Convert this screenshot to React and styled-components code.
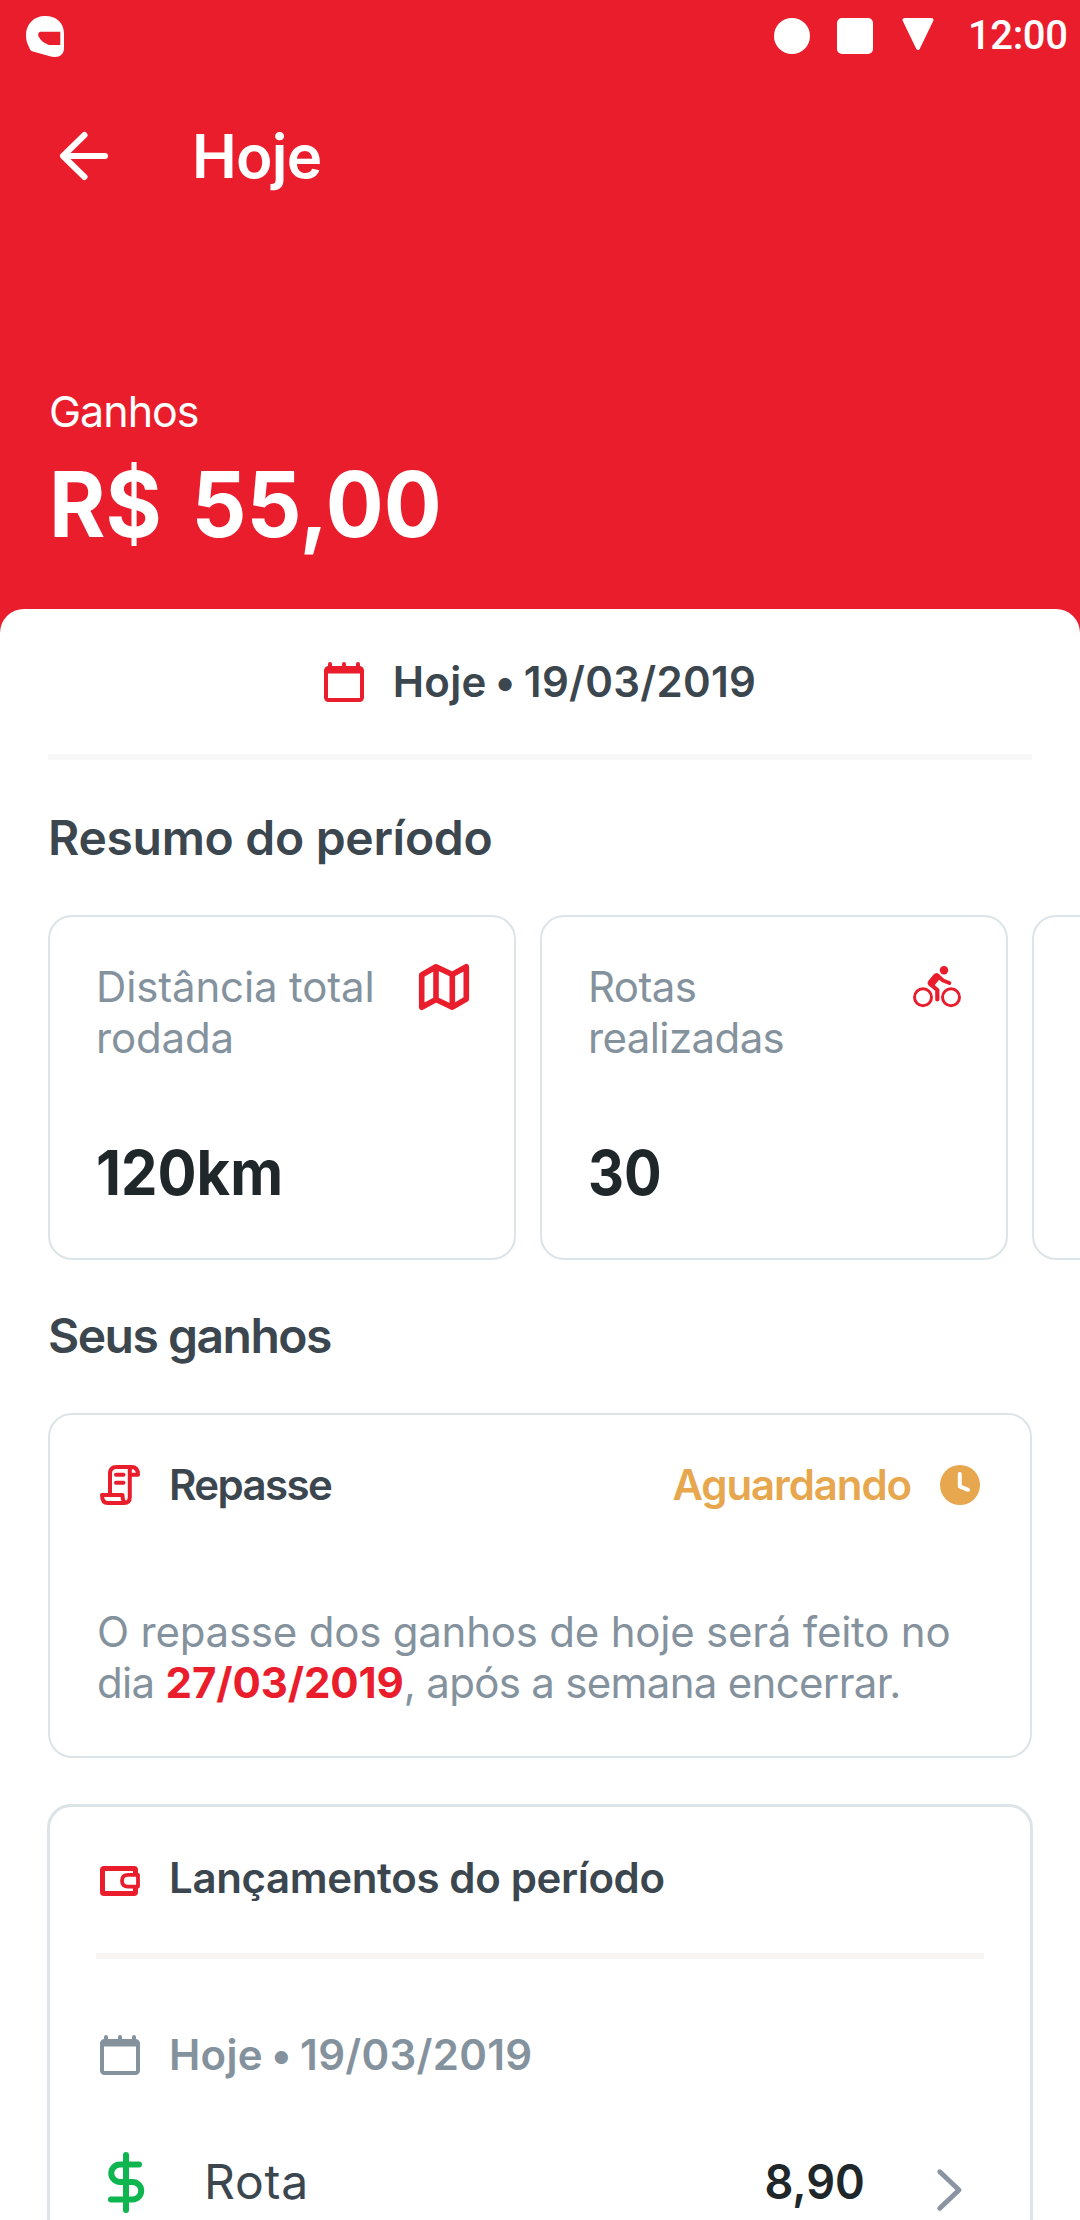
import React from "react";
import styled, { createGlobalStyle } from "styled-components";

const color = {
  red: "#ea1d2c",
  ink: "#3b464f",
  dark: "#20272a",
  muted: "#84929e",
  line: "#dce4e7",
  amber: "#e7a74e",
  green: "#0fb64f",
};

const GlobalStyle = createGlobalStyle`
  * { box-sizing: border-box; }
  body { margin: 0; background: #fff; }
`;

const Screen = styled.main`
  display: flex;
  flex-direction: column;
  width: 1080px;
  height: 2220px;
  overflow: hidden;
  background: ${color.red};
  font-family: Inter, "Liberation Sans", sans-serif;
`;

const StatusBar = styled.div`
  display: flex;
  align-items: center;
  justify-content: space-between;
  height: 72px;
  padding: 0 14px 0 26px;
`;

const StatusIcons = styled.div`
  display: flex;
  align-items: center;
`;

const Shape = styled.span`
  width: 36px;
  height: 36px;
  margin-right: ${(p) => (p.$round ? 27 : 29)}px;
  background: #fff;
  border-radius: ${(p) => (p.$round ? "50%" : "5px")};
`;

const Clock = styled.span`
  width: 98px;
  margin-left: 34px;
  color: #fff;
  font: 500 40px/48px Roboto, sans-serif;
  letter-spacing: -0.4px;
  white-space: nowrap;
`;

const AppBar = styled.header`
  display: flex;
  align-items: center;
  height: 168px;
  padding-left: 60px;
  gap: 84px;
`;

const Text = styled.span`
  font-size: ${(p) => p.$size || 42}px;
  line-height: ${(p) => p.$line || 52}px;
  font-weight: ${(p) => p.$weight || 400};
  letter-spacing: ${(p) => p.$track || 0}px;
  word-spacing: ${(p) => p.$words || 0}px;
  color: ${(p) => p.$color || color.ink};
  white-space: nowrap;
`;

const Figure = styled(Text)`
  transform: scaleX(${(p) => p.$condense});
  transform-origin: ${(p) => p.$origin || "left"} center;
`;

const Earnings = styled.section`
  display: flex;
  flex-direction: column;
  gap: 12px;
  height: 369px;
  padding: 145px 49px 0;
`;

const Sheet = styled.section`
  flex: 1;
  padding: 0 48px;
  background: #fff;
  border-radius: 24px 24px 0 0;
  overflow: hidden;
`;

const DateRow = styled.div`
  display: flex;
  align-items: center;
  justify-content: center;
  gap: 29px;
  height: 145px;
`;

const Divider = styled.hr`
  height: 6px;
  margin: ${(p) => p.$top || 0}px ${(p) => p.$bleed || 0}px 0;
  border: 0;
  background: ${(p) => p.$color || "#f8f8f8"};
`;

const Heading = styled.h2`
  margin: ${(p) => p.$top}px 0 48px;
  font-size: 48px;
  line-height: 58px;
  font-weight: 600;
  letter-spacing: ${(p) => p.$track || 0}px;
  color: ${color.ink};
`;

const Carousel = styled.div`
  display: grid;
  grid-template-columns: repeat(3, 468px);
  gap: 24px;
`;

const Card = styled.article`
  border: ${(p) => p.$border || 2}px solid ${color.line};
  border-radius: 24px;
`;

const StatCard = styled(Card)`
  display: flex;
  flex-direction: column;
  justify-content: space-between;
  height: 345px;
  padding: 44px 45px 48px 46px;
`;

const StatTop = styled.div`
  display: flex;
  justify-content: space-between;
`;

const StatLabel = styled(Text).attrs({ $line: 51, $color: color.muted })`
  white-space: pre-line;
`;

const StatValue = styled(Figure).attrs({
  $size: 62,
  $line: 75,
  $weight: 700,
  $color: color.dark,
})``;

const StatIcon = styled.span`
  padding-top: ${(p) => p.$top}px;
`;

const PayoutCard = styled(Card)`
  height: 345px;
  padding: 44px 50px 0;
`;

const Row = styled.div`
  display: flex;
  align-items: center;
  gap: 29px;
  height: 52px;
  margin-top: ${(p) => p.$top || 0}px;
`;

const Spacer = styled.span`
  flex: 1;
`;

const PayoutText = styled.p`
  display: flex;
  flex-direction: column;
  margin: 95px 0 0 -3px;

  strong {
    font-weight: 700;
    letter-spacing: -0.1px;
    color: ${color.red};
  }
`;

const PayoutLine = styled(Text).attrs({ $line: 51, $color: color.muted })``;

const EntriesCard = styled(Card)`
  height: 480px;
  margin: 46px -1px 0;
  padding: 45px 50px 0;
`;

const EntryRow = styled.div`
  display: flex;
  align-items: center;
  height: 60px;
  margin-top: 71px;
  padding: 0 18px 0 8px;
`;

const EntryLabel = styled(Text)`
  margin-left: 60px;
`;

const EntryArrow = styled.span`
  margin-left: 72px;
  padding-top: 16px;
`;

const Glyph = styled.svg`
  display: block;
  flex: none;
  overflow: visible;
  fill: none;
  stroke-linecap: round;
  stroke-linejoin: round;
`;

const Icon = ({ w, h, children, ...rest }) => (
  <Glyph width={w} height={h} viewBox={`0 0 ${w} ${h}`} {...rest}>
    {children}
  </Glyph>
);

const Helmet = () => (
  <Icon w={38} h={41}>
    <path
      fill="#fff"
      fillRule="evenodd"
      d="M19 0C31 0 38 7 38 18V32C38 38 34 41 29 41C27 41 25 40.5 23 40L7 35.5C4.5 35 4 33.5 3 31C1 27 0 24 0 19C0 8 8 0 19 0ZM15 15.7C12.5 15.7 11.7 18 12.6 20.5C14.5 24.5 18.5 27.5 23 29H34.3V15.7Z"
    />
  </Icon>
);

const Triangle = () => (
  <Icon w={32} h={36}>
    <path fill="#fff" stroke="#fff" strokeWidth="4" d="M2.5 2H29.5L16 30Z" />
  </Icon>
);

const BackArrow = () => (
  <Icon w={48} h={48} stroke="#fff" strokeWidth="6">
    <path d="M24.5 3L3 24L24.5 45M4 24H45" />
  </Icon>
);

const Calendar = ({ tone }) => (
  <Icon w={40} h={40} stroke={tone} strokeWidth="4">
    <rect x="2" y="6" width="36" height="32" rx="2.5" />
    <path d="M3 8H37V9.6H3Z" />
    <path d="M6 2V6M20 2V6M34 2V6" />
  </Icon>
);

const MapIcon = () => (
  <Icon w={50} h={46} stroke={color.red} strokeWidth="5.6">
    <path d="M2.7 11L17 2.8L33.3 10.5L47.3 2.8V35L33.3 43.2L17 35.5L2.7 43.2ZM17 3V35M33.3 11V43" />
  </Icon>
);

const Bike = () => (
  <Icon w={48} h={41} stroke={color.red}>
    <circle cx="10" cy="31.2" r="8.5" strokeWidth="3" />
    <circle cx="38" cy="31.2" r="8.5" strokeWidth="3" />
    <circle cx="31" cy="4.2" r="4.2" fill={color.red} stroke="none" />
    <path d="M23.5 11L18.5 17" strokeWidth="7.5" />
    <path d="M18.5 19L24.3 24V33.5" strokeWidth="4.2" />
    <path d="M25 10L30 14.5L36.4 17" strokeWidth="3.8" />
  </Icon>
);

const Scroll = () => (
  <Icon w={40} h={40} stroke={color.red} strokeWidth="4">
    <path d="M10 28V8.5Q10 2 16.5 2H31.5Q38 2 38 9.8H30.2M29.8 2.5V32Q29.8 38 24 38H8Q2 38 2 30H22.5Q22.5 37 26 38M16 9.8H23.5M16 17.7H23.5" />
  </Icon>
);

const ClockIcon = () => (
  <Icon w={40} h={40}>
    <circle cx="20" cy="20" r="20" fill={color.amber} />
    <path d="M19.8 9V21.4L28 24.8" stroke="#fff" strokeWidth="4" />
  </Icon>
);

const Wallet = () => (
  <Icon w={40} h={38} stroke={color.red} strokeWidth="5">
    <rect x="2.5" y="9.5" width="33" height="25" rx="1.5" />
    <path d="M38 15.8H28Q22 15.8 22 21.7T28 27.6H38Z" fill="#fff" strokeWidth="3.8" />
  </Icon>
);

const Dollar = () => (
  <Icon w={36} h={61} stroke={color.green} strokeWidth="6">
    <path d="M18 3V58M31 12.5H12A8.6 8.6 0 0 0 12 30H24.5A8.6 8.6 0 0 1 24.5 47.5H3" />
  </Icon>
);

const Chevron = () => (
  <Icon w={25} h={42} stroke="#8a94a2" strokeWidth="5">
    <path d="M2.8 2.8L22 21L2.8 39.2" />
  </Icon>
);

export default function App() {
  return (
    <Screen>
      <GlobalStyle />
      <StatusBar>
        <Helmet />
        <StatusIcons>
          <Shape $round />
          <Shape />
          <Triangle />
          <Clock>12:00</Clock>
        </StatusIcons>
      </StatusBar>

      <AppBar>
        <BackArrow />
        <Text as="h1" $size={60} $line={72} $weight={600} $track={-0.7} $color="#fff">Hoje</Text>
      </AppBar>

      <Earnings>
        <Text $size={43} $track={-1} $color="#fff">Ganhos</Text>
        <Figure $size={91} $line={110} $weight={700} $words={10} $condense={0.945} $color="#fff">
          R$ 55,00
        </Figure>
      </Earnings>

      <Sheet>
        <DateRow>
          <Calendar tone={color.red} />
          <Text $weight={600} $track={0.3} $words={-3}>Hoje • 19/03/2019</Text>
        </DateRow>
        <Divider />

        <Heading $top={49} $track={-0.3}>Resumo do período</Heading>
        <Carousel>
          <StatCard>
            <StatTop>
              <StatLabel $track={-0.15}>{"Distância total\nrodada"}</StatLabel>
              <StatIcon $top={3}><MapIcon /></StatIcon>
            </StatTop>
            <StatValue $condense={0.935}>120km</StatValue>
          </StatCard>
          <StatCard>
            <StatTop>
              <StatLabel $track={-0.6}>{"Rotas\nrealizadas"}</StatLabel>
              <StatIcon $top={5}><Bike /></StatIcon>
            </StatTop>
            <StatValue $condense={0.9}>30</StatValue>
          </StatCard>
          <StatCard />
        </Carousel>

        <Heading $top={47} $track={-1.5}>Seus ganhos</Heading>
        <PayoutCard>
          <Row>
            <Scroll />
            <Text $weight={600} $track={-1.6}>Repasse</Text>
            <Spacer />
            <Text $weight={600} $track={-1.1} $color={color.amber}>Aguardando</Text>
            <ClockIcon />
          </Row>
          <PayoutText>
            <PayoutLine $track={-0.22}>O repasse dos ganhos de hoje será feito no</PayoutLine>
            <PayoutLine $track={-0.68}>
              dia <strong>27/03/2019</strong>, após a semana encerrar.
            </PayoutLine>
          </PayoutText>
        </PayoutCard>

        <EntriesCard $border={3}>
          <Row>
            <Wallet />
            <Text $weight={600} $track={-0.35}>Lançamentos do período</Text>
          </Row>
          <Divider $top={49} $bleed={-4} $color="#f9f5f3" />
          <Row $top={70}>
            <Calendar tone={color.muted} />
            <Text $weight={600} $track={0.3} $words={-3} $color={color.muted}>Hoje • 19/03/2019</Text>
          </Row>
          <EntryRow>
            <Dollar />
            <EntryLabel $size={48} $line={58} $track={0.8}>Rota</EntryLabel>
            <Spacer />
            <Figure $size={48} $line={58} $weight={600} $condense={0.94} $origin="right" $color={color.dark}>
              8,90
            </Figure>
            <EntryArrow><Chevron /></EntryArrow>
          </EntryRow>
        </EntriesCard>
      </Sheet>
    </Screen>
  );
}
